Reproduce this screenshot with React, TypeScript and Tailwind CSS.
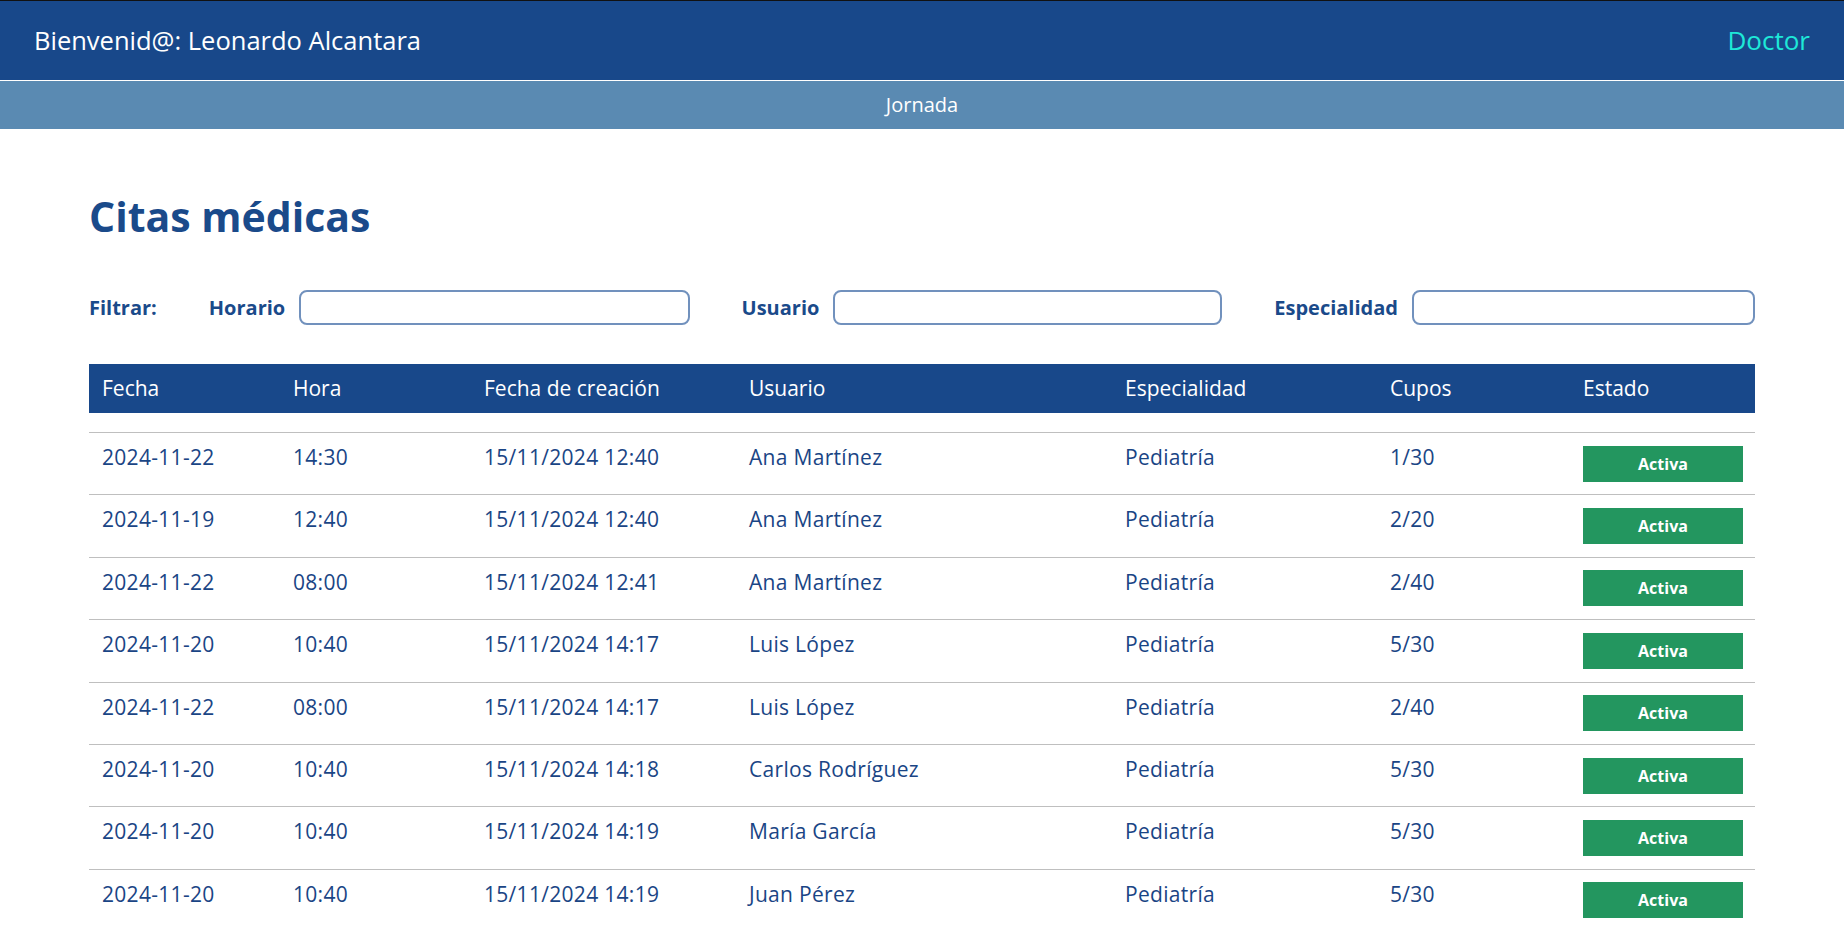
const citas = [
  { fecha: "2024-11-22", hora: "14:30", creada: "15/11/2024 12:40", usuario: "Ana Martínez", especialidad: "Pediatría", cupos: "1/30" },
  { fecha: "2024-11-19", hora: "12:40", creada: "15/11/2024 12:40", usuario: "Ana Martínez", especialidad: "Pediatría", cupos: "2/20" },
  { fecha: "2024-11-22", hora: "08:00", creada: "15/11/2024 12:41", usuario: "Ana Martínez", especialidad: "Pediatría", cupos: "2/40" },
  { fecha: "2024-11-20", hora: "10:40", creada: "15/11/2024 14:17", usuario: "Luis López", especialidad: "Pediatría", cupos: "5/30" },
  { fecha: "2024-11-22", hora: "08:00", creada: "15/11/2024 14:17", usuario: "Luis López", especialidad: "Pediatría", cupos: "2/40" },
  { fecha: "2024-11-20", hora: "10:40", creada: "15/11/2024 14:18", usuario: "Carlos Rodríguez", especialidad: "Pediatría", cupos: "5/30" },
  { fecha: "2024-11-20", hora: "10:40", creada: "15/11/2024 14:19", usuario: "María García", especialidad: "Pediatría", cupos: "5/30" },
  { fecha: "2024-11-20", hora: "10:40", creada: "15/11/2024 14:19", usuario: "Juan Pérez", especialidad: "Pediatría", cupos: "5/30" },
];

const columnas = ["Fecha", "Hora", "Fecha de creación", "Usuario", "Especialidad", "Cupos", "Estado"];
const grid = "grid grid-cols-[191px_191px_265px_376px_265px_193px_1fr]";

function Filtro({ label }: { label: string }) {
  return (
    <div className="flex flex-1 items-center gap-[14px]">
      <label className="text-[20px] font-bold text-[#1a4a8a]">{label}</label>
      <input
        type="text"
        className="h-[35px] flex-1 rounded-lg border-2 border-[#7191bd] bg-white px-2 outline-none"
      />
    </div>
  );
}

export default function App() {
  return (
    <div className="min-h-screen bg-white font-['Open_Sans',sans-serif]">
      {/* Top bar */}
      <header className="flex h-[80px] items-center justify-between border-t border-[#111] bg-[#18488a] px-[34px]">
        <span className="text-[25.5px] text-white">Bienvenid@: Leonardo Alcantara</span>
        <span className="text-[26px] text-[#1ee8d8]">Doctor</span>
      </header>
      <nav className="flex h-[49px] items-center justify-center border-t border-white bg-[#5a8ab2]">
        <span className="text-[20px] text-white">Jornada</span>
      </nav>

      <main className="px-[89px] pb-10">
        <h1 className="mt-[63px] text-[41px] leading-[48px] font-bold text-[#1a4a8a]">Citas médicas</h1>

        {/* Filters */}
        <div className="mt-[50px] flex items-center gap-[52px]">
          <span className="text-[20px] font-bold text-[#1a4a8a]">Filtrar:</span>
          <Filtro label="Horario" />
          <Filtro label="Usuario" />
          <Filtro label="Especialidad" />
        </div>

        {/* Table */}
        <div className="mt-[39px]">
          <div className={`${grid} h-[49px] items-center bg-[#18488a] text-[21px] text-white`}>
            {columnas.map((c) => (
              <div key={c} className="pl-[13px]">
                {c}
              </div>
            ))}
          </div>

          <div className="mt-[19px] tracking-[0.3px]">
            {citas.map((c, i) => (
              <div
                key={i}
                className={`${grid} h-[62.4px] items-center border-t border-[#bfbfbf] text-[21px] text-[#1a4585]`}
              >
                <div className="pb-[12px] pl-[13px]">{c.fecha}</div>
                <div className="pb-[12px] pl-[13px]">{c.hora}</div>
                <div className="pb-[12px] pl-[13px]">{c.creada}</div>
                <div className="pb-[12px] pl-[13px]">{c.usuario}</div>
                <div className="pb-[12px] pl-[13px]">{c.especialidad}</div>
                <div className="pb-[12px] pl-[13px]">{c.cupos}</div>
                <div className="pl-[13px]">
                  <button className="h-[36px] w-[160px] bg-[#23965f] text-[16px] font-bold tracking-normal text-white">
                    Activa
                  </button>
                </div>
              </div>
            ))}
          </div>
        </div>
      </main>
    </div>
  );
}
